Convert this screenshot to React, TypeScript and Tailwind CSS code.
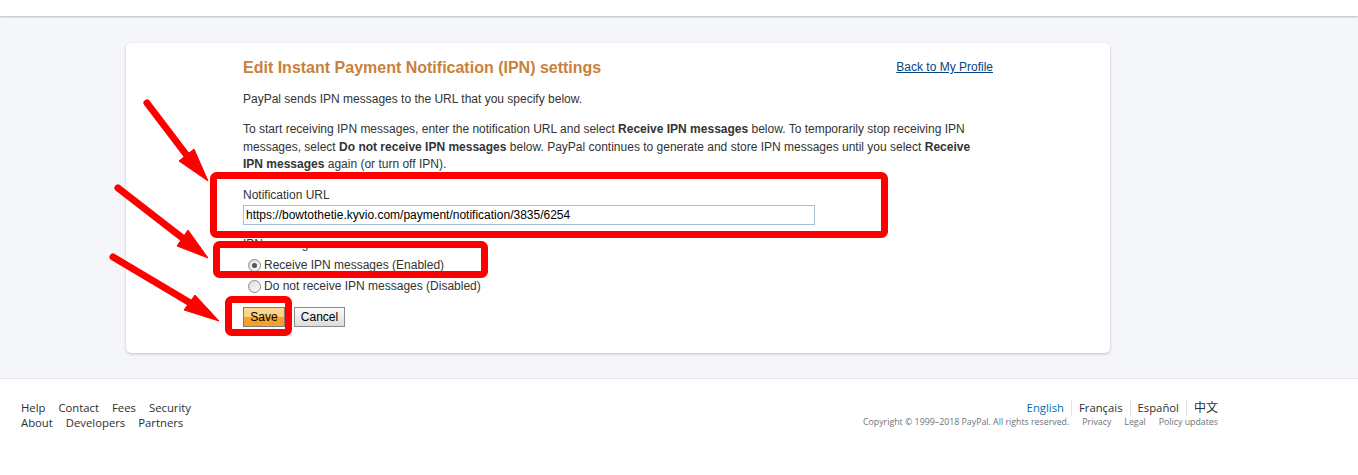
import React from 'react'

const arial = { fontFamily: '"Liberation Sans", Arial, sans-serif' }

function Radio({ checked }: { checked?: boolean }) {
  return (
    <span className="w-[13px] h-[13px] rounded-full border border-[#8a8a8a] bg-gradient-to-br from-[#dcdcdc] to-[#fbfbfb] flex items-center justify-center shrink-0">
      {checked && <span className="w-[5px] h-[5px] rounded-full bg-[#555]" />}
    </span>
  )
}

function Annotations() {
  const arrows = [
    { x1: 147, y1: 103, tip: [208, 181], b1: [179, 161], b2: [194, 149] },
    { x1: 118, y1: 188, tip: [208, 258], b1: [177, 246], b2: [188, 230] },
    { x1: 113, y1: 257, tip: [219, 321], b1: [184, 310], b2: [195, 295] },
  ]
  return (
    <svg className="absolute left-0 top-0 pointer-events-none" width="1358" height="475">
      <rect x="213.5" y="175.5" width="671" height="59" rx="3" fill="none" stroke="#ff0000" strokeWidth="7" />
      <rect x="216.5" y="244.5" width="268" height="30" rx="3" fill="none" stroke="#ff0000" strokeWidth="7" />
      <rect x="228.5" y="299.5" width="60" height="33" rx="3" fill="none" stroke="#ff0000" strokeWidth="7" />
      {arrows.map((a, i) => {
        const mx = (a.b1[0] + a.b2[0]) / 2
        const my = (a.b1[1] + a.b2[1]) / 2
        return (
          <g key={i} fill="#ff0000" stroke="#ff0000">
            <line x1={a.x1} y1={a.y1} x2={mx} y2={my} strokeWidth="7" strokeLinecap="round" />
            <polygon points={`${a.tip[0]},${a.tip[1]} ${a.b1[0]},${a.b1[1]} ${a.b2[0]},${a.b2[1]}`} strokeWidth="1" strokeLinejoin="round" />
          </g>
        )
      })}
    </svg>
  )
}

export default function App() {
  return (
    <div className="relative w-[1358px] h-[475px] overflow-hidden bg-[#f5f6fa]">
      {/* top bar */}
      <div className="h-[16px] bg-white shadow-[0_1px_2px_rgba(0,0,0,0.25)] relative" />

      {/* main */}
      <div className="h-[362px] pt-[27px]">
        <div className="ml-[126px] w-[984px] h-[310px] bg-white rounded-[5px] shadow-[0_1px_3px_rgba(0,0,0,0.22)] pt-[15px] pl-[117px]" style={arial}>
          <div className="w-[750px] flex justify-between items-start">
            <h1 className="text-[16px] leading-[20px] font-bold text-[#c8813c]">Edit Instant Payment Notification (IPN) settings</h1>
            <a href="#" className="text-[12px] leading-[18px] text-[#084482] underline">Back to My Profile</a>
          </div>
          <p className="mt-[12px] text-[12px] leading-[18px] text-[#333]">PayPal sends IPN messages to the URL that you specify below.</p>
          <p className="mt-[13px] w-[740px] text-[12px] leading-[17.5px] text-[#333]">
            To start receiving IPN messages, enter the notification URL and select <b>Receive IPN messages</b> below. To temporarily stop receiving IPN messages, select <b>Do not receive IPN messages</b> below. PayPal continues to generate and store IPN messages until you select <b>Receive IPN messages</b> again (or turn off IPN).
          </p>
          <div className="mt-[14px] text-[12px] leading-[15px] text-[#333]">Notification URL</div>
          <input
            readOnly
            defaultValue="https://bowtothetie.kyvio.com/payment/notification/3835/6254"
            className="mt-[2px] block w-[572px] h-[20px] border border-[#a8bfd8] px-[2px] text-[12px] text-black outline-none"
            style={arial}
          />
          <div className="mt-[12.5px] text-[12px] leading-[15px] text-[#333]">IPN messages</div>
          <div className="mt-[2.5px] flex flex-col text-[12px] text-[#333]">
            <label className="h-[21px] flex items-center pl-[5px] gap-[3px]"><Radio checked />Receive IPN messages (Enabled)</label>
            <label className="h-[21px] flex items-center pl-[5px] gap-[3px]"><Radio />Do not receive IPN messages (Disabled)</label>
          </div>
          <div className="mt-[10.5px] flex gap-[9px]">
            <button className="w-[42px] h-[20px] border border-[#7c7c7c] bg-[linear-gradient(#fed98f_0%,#fdd07a_50%,#f8a12a_50%,#f8a12a_100%)] text-[12px] text-black" style={arial}>Save</button>
            <button className="w-[51px] h-[20px] border border-[#8a8a8a] bg-[linear-gradient(#fbfbfb,#dcdcdc)] text-[12px] text-black" style={arial}>Cancel</button>
          </div>
        </div>
      </div>

      {/* footer */}
      <footer className="h-[97px] bg-white border-t border-[#e6e7eb] flex justify-between pl-[21px] pr-[140px] pt-[21px]" style={{ fontFamily: '"Open Sans", "Noto Sans", sans-serif' }}>
        <div className="text-[11.3px] leading-[15px] text-[#2c2e2f]">
          <div className="flex gap-[13px]"><a>Help</a><a>Contact</a><a>Fees</a><a>Security</a></div>
          <div className="flex gap-[13px]"><a>About</a><a>Developers</a><a>Partners</a></div>
        </div>
        <div className="flex flex-col items-end">
          <div className="flex text-[11.3px] leading-[16px] text-[#2c2e2f]">
            <a className="text-[#0070ba] pr-[7px] border-r border-[#e1e1e1]">English</a>
            <a className="px-[7px] border-r border-[#e1e1e1]">Français</a>
            <a className="px-[7px] border-r border-[#e1e1e1]">Español</a>
            <a className="pl-[7px] text-[12px]" style={{ fontFamily: '"Open Sans", "Noto Sans CJK SC", sans-serif' }}>中文</a>
          </div>
          <div className="flex gap-[13px] text-[8.8px] leading-[12px] text-[#6c7378]">
            <span>Copyright © 1999–2018 PayPal. All rights reserved.</span>
            <a>Privacy</a><a>Legal</a><a>Policy updates</a>
          </div>
        </div>
      </footer>

      <Annotations />
    </div>
  )
}
